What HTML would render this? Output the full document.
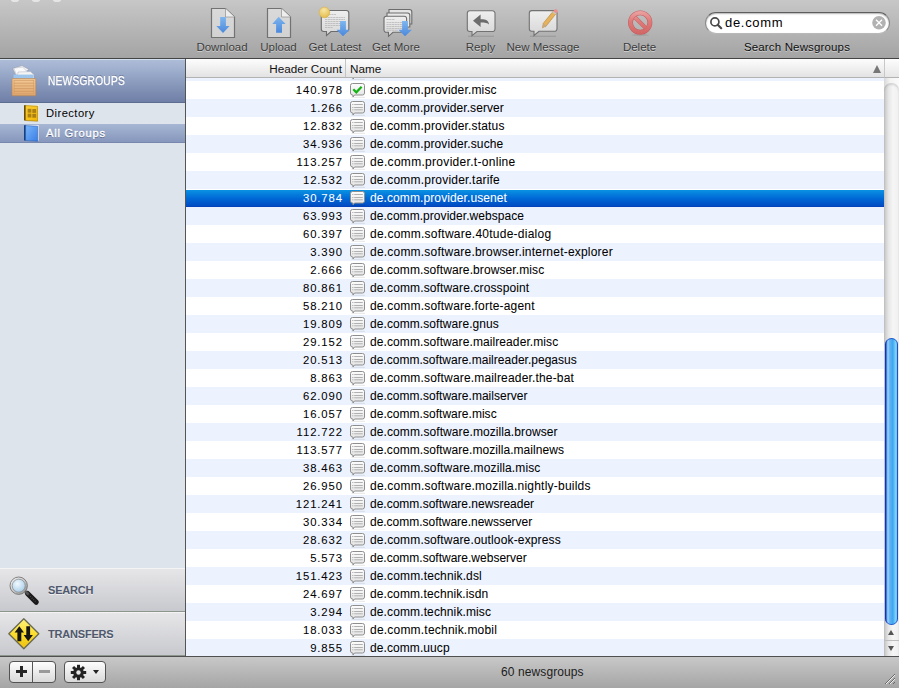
<!DOCTYPE html>
<html><head><meta charset="utf-8">
<style>
*{box-sizing:border-box}
html,body{margin:0;padding:0;width:899px;height:688px;overflow:hidden;font-family:"Liberation Sans",sans-serif;background:#fff}
.abs{position:absolute}
svg.abs{z-index:3}
#toolbar{position:absolute;left:0;top:0;width:899px;height:59px;background:linear-gradient(#c7c7c7,#a4a4a4);border-bottom:1px solid #444}
.tl{position:absolute;top:41px;font-size:11.5px;color:#3c3c3c;text-shadow:0 1px 0 rgba(255,255,255,.45);white-space:nowrap;transform:translateX(-50%)}
.ti{position:absolute}
#sidebar{position:absolute;left:0;top:59px;width:185px;height:597px;background:#dde4ec}
#sbline{position:absolute;left:185px;top:59px;width:1px;height:597px;background:#555}
#ngh{position:absolute;left:0;top:0;width:185px;height:44px;background:linear-gradient(#aebdd8,#a2b2d0 20%,#6e7ea6);border-bottom:1px solid #5d6d92;box-shadow:inset 0 1px 0 #d2ddef}
#ngh .t{position:absolute;left:48px;top:14.5px;font-size:12.4px;font-weight:normal;-webkit-text-stroke:0.35px #fff;color:#fff;letter-spacing:0.3px;text-shadow:0 -1px 0 rgba(40,50,80,.5);transform-origin:0 0;transform:scaleX(0.82)}
.srow{position:absolute;left:0;width:185px;font-size:11.2px;letter-spacing:0.45px}
.sect{position:absolute;left:0;width:185px;background:linear-gradient(#e6e6e8,#c8c9ce);border-top:1px solid #f4f4f5;border-bottom:1px solid #8c968c}
.sect .t{position:absolute;left:48px;font-size:11px;font-weight:bold;color:#4f586c;text-shadow:0 1px 0 rgba(255,255,255,.6);letter-spacing:-0.2px}
#thead{position:absolute;left:186px;top:59px;width:698px;height:19px;background:linear-gradient(#fdfdfd,#e3e3e3);border-bottom:1px solid #b3b3b3}
#thead .h{position:absolute;top:3px;font-size:11.7px;color:#111}
#corner{position:absolute;left:884px;top:59px;width:15px;height:19px;background:linear-gradient(#fdfdfd,#e6e6e6);border-left:1px solid #c8c8c8;border-bottom:1px solid #b3b3b3}
#tbody{position:absolute;left:186px;top:78px;width:698px;height:578px;overflow:hidden;background:#fff}
.row{position:absolute;left:0;width:698px;height:18px;font-size:12px;line-height:18px;color:#000;-webkit-text-stroke:0.05px currentColor}
.row.odd{background:#edf3fe}
.row.sel{background:linear-gradient(#0a92e2,#0068d6 50%,#004cc2 94%,#0a3ab4);color:#fff;border-top:1px solid #fff}
.row.sel .cnt,.row.sel .nm{line-height:16px}
.cnt{position:absolute;right:541.1px;top:0;text-align:right;font-size:11.3px;letter-spacing:0.9px}
.ico{position:absolute;left:164px;top:2px;width:16px;height:16px}
.row.sel .ico{top:1px}
.ico svg{display:block}
.nm{position:absolute;left:184px;top:0;white-space:nowrap;letter-spacing:0.12px}
#scroll{position:absolute;left:884px;top:78px;width:15px;height:578px;background:linear-gradient(90deg,#d8d8d8,#f4f4f4 40%,#fafafa)}
#track{position:absolute;left:0;top:5px;width:15px;height:573px;border-radius:7px 7px 0 0;background:linear-gradient(90deg,#c4c4c4,#e6e6e6 30%,#f6f6f6 60%,#efefef);box-shadow:inset 0 2px 2px rgba(0,0,0,.12)}
#bottom{position:absolute;left:0;top:656px;width:899px;height:32px;background:linear-gradient(#c8c8c8,#a5a5a5);border-top:1px solid #505050}
</style></head><body>

<div id="toolbar">
  <div class="abs" style="left:11px;top:-2px;width:8px;height:4px;border-radius:50%;background:rgba(255,255,255,.55);filter:blur(0.6px)"></div>
  <div class="abs" style="left:32px;top:-2px;width:8px;height:4px;border-radius:50%;background:rgba(255,255,255,.55);filter:blur(0.6px)"></div>
  <div class="abs" style="left:53px;top:-2px;width:8px;height:4px;border-radius:50%;background:rgba(255,255,255,.55);filter:blur(0.6px)"></div>

  <!-- Download -->
  <svg class="ti" style="left:210px;top:7px" width="27" height="32" viewBox="0 0 27 32">
    <defs><linearGradient id="blu" x1="0" y1="0" x2="0" y2="1"><stop offset="0" stop-color="#7fb6ee"/><stop offset="1" stop-color="#4a88dc"/></linearGradient>
    <linearGradient id="docg" x1="0" y1="0" x2="0" y2="1"><stop offset="0" stop-color="#dadada"/><stop offset="1" stop-color="#d2d2d2"/></linearGradient></defs>
    <path d="M1.5 1.5H15.5L24.5 10V30.5H1.5Z" fill="url(#docg)" stroke="#727272" stroke-width="1.2"/>
    <path d="M15.5 1.5V10H24.5" fill="#eeeeee" stroke="#9a9a9a" stroke-width="0.8"/>
    <path d="M10.2 10H15.9V19H19.6L13.05 26.1L6.3 19H10.2Z" fill="url(#blu)"/>
  </svg>
  <!-- Upload -->
  <svg class="ti" style="left:266px;top:7px" width="27" height="32" viewBox="0 0 27 32">
    <path d="M1.5 1.5H15.5L24.5 10V30.5H1.5Z" fill="url(#docg)" stroke="#727272" stroke-width="1.2"/>
    <path d="M15.5 1.5V10H24.5" fill="#eeeeee" stroke="#9a9a9a" stroke-width="0.8"/>
    <path d="M12.65 9.8L19.6 16.9H16V25.8H10.1V16.9H6.3Z" fill="url(#blu)"/>
  </svg>
  <!-- Get Latest -->
  <svg class="ti" style="left:316px;top:5px" width="36" height="34" viewBox="0 0 36 34">
    <defs><linearGradient id="bub" x1="0" y1="0" x2="0" y2="1"><stop offset="0" stop-color="#efefef"/><stop offset="1" stop-color="#d6d6d6"/></linearGradient>
    <radialGradient id="yel" cx="0.45" cy="0.3" r="0.7"><stop offset="0" stop-color="#f8e6a6"/><stop offset="1" stop-color="#e3bd4c"/></radialGradient></defs>
    <path d="M7.8 5.5H30.3A2.5 2.5 0 0 1 32.8 8V24A2.5 2.5 0 0 1 30.3 26.5H15L10.5 30.5V26.5H7.8A2.5 2.5 0 0 1 5.3 24V8A2.5 2.5 0 0 1 7.8 5.5Z" fill="url(#bub)" stroke="#6c6c6c" stroke-width="1.1"/>
    <g stroke="#a8a8a8" stroke-width="0.6" stroke-dasharray="2.2 0.5"><path d="M10 9.5H20"/><path d="M9 12.5H29"/><path d="M9 14.5H29"/><path d="M9 16.5H29"/><path d="M9 18.5H29"/><path d="M9 20.5H29"/><path d="M9 22.5H17"/></g>
    <circle cx="8.4" cy="7.4" r="5.3" fill="url(#yel)" stroke="#d8b65a" stroke-width="0.8"/>
    <path d="M24.1 16H29.9V24.7H33.8L27 31.2L20.5 24.7H24.1Z" fill="url(#blu)"/>
  </svg>
  <!-- Get More -->
  <svg class="ti" style="left:380px;top:5px" width="36" height="34" viewBox="0 0 36 34">
    <path d="M9 4.5H29.5A2.3 2.3 0 0 1 31.8 6.8V19H9Z" fill="#e4e4e4" stroke="#6c6c6c" stroke-width="1.1"/>
    <path d="M7 8H27.5A2.3 2.3 0 0 1 29.8 10.3V22H7Z" fill="#e8e8e8" stroke="#6c6c6c" stroke-width="1.1"/>
    <path d="M6.3 11.3H24.3A2.3 2.3 0 0 1 26.6 13.6V25A2.3 2.3 0 0 1 24.3 27.3H13L8.5 31.3V27.3H6.3A2.3 2.3 0 0 1 4 25V13.6A2.3 2.3 0 0 1 6.3 11.3Z" fill="url(#bub)" stroke="#6c6c6c" stroke-width="1.1"/>
    <g stroke="#a8a8a8" stroke-width="0.6" stroke-dasharray="2.2 0.5"><path d="M6.5 14.5H15"/><path d="M6.5 17.5H24"/><path d="M6.5 19.5H24"/><path d="M6.5 21.5H24"/><path d="M6.5 23.5H24"/><path d="M6.5 25.3H18"/></g>
    <path d="M22.1 16H27.9V24.7H32L25 31.2L18.4 24.7H22.1Z" fill="url(#blu)"/>
  </svg>
  <!-- Reply -->
  <svg class="ti" style="left:464px;top:7px" width="34" height="31" viewBox="0 0 34 31">
    <path d="M5.8 3.8H28.5A2.5 2.5 0 0 1 31 6.3V22A2.5 2.5 0 0 1 28.5 24.5H13L8 28.6V24.5H5.8A2.5 2.5 0 0 1 3.3 22V6.3A2.5 2.5 0 0 1 5.8 3.8Z" fill="url(#bub)" stroke="#727272" stroke-width="1.1"/>
    <path d="M9 13.8L16.6 7.5V12.3C21 12.1 24.7 13.2 25 17.4C23.9 15.9 21 15.7 16.6 15.6V20Z" fill="#6c6c6c"/>
    <path d="M4 29.3H30" stroke="rgba(0,0,0,0.12)" stroke-width="1.2"/>
  </svg>
  <!-- New Message -->
  <svg class="ti" style="left:526px;top:5px" width="34" height="33" viewBox="0 0 34 33">
    <path d="M5.8 5.6H28.5A2.5 2.5 0 0 1 31 8.1V23.8A2.5 2.5 0 0 1 28.5 26.3H13L8 30.5V26.3H5.8A2.5 2.5 0 0 1 3.3 23.8V8.1A2.5 2.5 0 0 1 5.8 5.6Z" fill="url(#bub)" stroke="#727272" stroke-width="1.1"/>
    <path d="M18 21.5L26.5 9.5" stroke="rgba(0,0,0,0.12)" stroke-width="4"/>
    <path d="M4 31.3H30" stroke="rgba(0,0,0,0.12)" stroke-width="1.2"/>
    <path d="M16.5 22.8L17.3 18.3L27.2 6.2L30.2 8.6L20.3 20.7Z" fill="#e6b35c" stroke="#b8883a" stroke-width="0.6"/>
    <path d="M16.5 22.8L17.3 18.3L20.3 20.7Z" fill="#c8a882"/>
    <path d="M27.2 6.2L28.4 4.8A1.5 1.5 0 0 1 30.6 4.6L31.2 5.1A1.5 1.5 0 0 1 31.4 7.2L30.2 8.6Z" fill="#e89090"/>
    <path d="M26.8 6.7L29.8 9.1" stroke="#c8c8c8" stroke-width="1.3"/>
  </svg>
  <!-- Delete -->
  <svg class="ti" style="left:626px;top:9px" width="28" height="28" viewBox="0 0 28 28">
    <defs><linearGradient id="red" gradientUnits="userSpaceOnUse" x1="0" y1="2" x2="0" y2="25"><stop offset="0" stop-color="#eba4a4"/><stop offset="0.45" stop-color="#df7a7a"/><stop offset="1" stop-color="#d26666"/></linearGradient></defs>
    <ellipse cx="14.2" cy="26" rx="9" ry="1.2" fill="rgba(0,0,0,0.08)"/>
    <circle cx="14.2" cy="13.6" r="9.7" fill="none" stroke="#c25c5c" stroke-width="4.9"/>
    <circle cx="14.2" cy="13.6" r="9.7" fill="none" stroke="url(#red)" stroke-width="3.9"/>
    <path d="M8.9 8.3L19.5 18.9" stroke="#c86262" stroke-width="4.1"/>
    <path d="M8.9 8.3L19.5 18.9" stroke="url(#red)" stroke-width="3.3"/>
  </svg>
  <!-- Search field -->
  <div class="abs" style="left:705px;top:12px;width:185px;height:22px;border-radius:11px;background:#fff;border:1px solid;border-color:#5e5e5e #8a8a8a #b8b8b8 #8a8a8a;box-shadow:inset 0 1px 1.5px rgba(0,0,0,.3)"></div>
  <svg class="ti" style="left:709px;top:16px" width="15" height="15" viewBox="0 0 15 15">
    <circle cx="5.9" cy="5.9" r="4" fill="none" stroke="#4a4a4a" stroke-width="1.7"/>
    <path d="M8.7 8.7L12.2 12.2" stroke="#4a4a4a" stroke-width="2.2" stroke-linecap="round"/>
  </svg>
  <div class="abs" style="left:725px;top:15px;font-size:13px;color:#000;letter-spacing:0.7px">de.comm</div>
  <svg class="ti" style="left:871px;top:16px" width="15" height="15" viewBox="0 0 15 15">
    <circle cx="8" cy="6.8" r="6.8" fill="#b2b2b2"/>
    <path d="M5 3.8L11 9.8M11 3.8L5 9.8" stroke="#fff" stroke-width="1.3"/>
  </svg>
  <div class="tl" style="left:222px">Download</div>
  <div class="tl" style="left:278.5px">Upload</div>
  <div class="tl" style="left:335px">Get Latest</div>
  <div class="tl" style="left:396px">Get More</div>
  <div class="tl" style="left:480.5px">Reply</div>
  <div class="tl" style="left:543px">New Message</div>
  <div class="tl" style="left:639.5px">Delete</div>
  <div class="tl" style="left:797px;color:#0e0e0e;letter-spacing:0.15px">Search Newsgroups</div>
</div>

<div id="sidebar">
  <div id="ngh"><div class="t">NEWSGROUPS</div></div>
  <!-- crate icon -->
  <svg class="abs" style="left:9px;top:4px" width="30" height="36" viewBox="0 0 30 36">
    <defs><linearGradient id="wood" x1="0" y1="0" x2="0" y2="1"><stop offset="0" stop-color="#f3c995"/><stop offset="1" stop-color="#e0a66e"/></linearGradient></defs>
    <path d="M3.6 5.5L13 2.6L20 6.5L8 14Z" fill="#f2f2f2" stroke="#8e95a8" stroke-width="0.5"/>
    <path d="M4.8 5.2L13.5 4L18.5 9L9 15.5Z" fill="#fafafa" stroke="#a0a6b6" stroke-width="0.4"/>
    <path d="M9 9L21.5 8.6L24.8 11.5L25 15.6H8Z" fill="#f4f4f4" stroke="#9aa0b0" stroke-width="0.4"/>
    <rect x="4.5" y="11.6" width="20" height="4.2" fill="#9ec6ec"/>
    <rect x="3" y="15.6" width="23.8" height="17.2" rx="0.8" fill="url(#wood)" stroke="#b98656" stroke-width="0.7"/>
    <rect x="5" y="17.5" width="19.8" height="13.4" fill="none" stroke="#cf9a64" stroke-width="0.6"/>
    <g stroke="#c99058" stroke-width="0.7" opacity="0.85"><path d="M5 20.2H24.8"/><path d="M5 22.9H24.8"/><path d="M5 25.6H24.8"/><path d="M5 28.3H24.8"/></g>
  </svg>
  <!-- directory book -->
  <svg class="abs" style="left:23px;top:45px" width="17" height="18" viewBox="0 0 17 18">
    <defs><linearGradient id="yb" x1="0" y1="0" x2="1" y2="1"><stop offset="0" stop-color="#ffd23a"/><stop offset="1" stop-color="#f0b400"/></linearGradient></defs>
    <path d="M1 1.2H14V16.5H1Z" fill="#6a4e06"/>
    <path d="M3 1H15.6V16.8L14.2 16.4H3Z" fill="#fff6d0"/>
    <path d="M2.6 1.6L14.6 2.2V17.2L2.6 16.5Z" fill="url(#yb)" stroke="#9a7406" stroke-width="0.6"/>
    <g fill="#a27a12" opacity="0.9"><rect x="4.6" y="4.8" width="3.8" height="3.9"/><rect x="9.3" y="5" width="3.8" height="3.9"/><rect x="4.6" y="9.6" width="3.8" height="3.9"/><rect x="9.3" y="9.8" width="3.8" height="3.9"/></g>
  </svg>
  <!-- all groups book -->
  <svg class="abs" style="left:23px;top:65px" width="17" height="18" viewBox="0 0 17 18">
    <defs><linearGradient id="bb" x1="0" y1="0" x2="1" y2="1"><stop offset="0" stop-color="#7ab6fa"/><stop offset="1" stop-color="#3a7ee6"/></linearGradient></defs>
    <path d="M1 1.2H14V16.5H1Z" fill="#163e80"/>
    <path d="M3 1H15.6V16.8L14.2 16.4H3Z" fill="#f4f8ff"/>
    <path d="M2.6 1.6L14.6 2.2V17.2L2.6 16.5Z" fill="url(#bb)" stroke="#2a5fb0" stroke-width="0.6"/>
  </svg>
  <div class="srow" style="top:44px;height:21px;background:#dee4ec"><span class="abs" style="left:46px;top:4px;color:#000">Directory</span></div>
  <div class="srow" style="top:65px;height:19px;background:linear-gradient(#a6b6d3,#8797bd);border-bottom:1px solid #7787ad"><span class="abs" style="left:46px;top:3px;color:#fff;letter-spacing:0.75px;-webkit-text-stroke:0.3px #fff;text-shadow:0 1px 0 rgba(20,30,60,.5)">All Groups</span></div>
  <div class="sect" style="top:509px;height:44px"><div class="t" style="top:15px">SEARCH</div></div>
  <div class="sect" style="top:553px;height:44px"><div class="t" style="top:15px">TRANSFERS</div></div>
</div>
<div id="sbline"></div>
  <!-- magnifier -->
  <svg class="abs" style="left:6px;top:573px" width="34" height="34" viewBox="0 0 34 34">
    <defs><radialGradient id="glass" cx="0.4" cy="0.35" r="0.7"><stop offset="0" stop-color="#f2faff"/><stop offset="1" stop-color="#a6cce8"/></radialGradient>
    <linearGradient id="rim" x1="0" y1="0" x2="1" y2="1"><stop offset="0" stop-color="#fafafa"/><stop offset="0.6" stop-color="#bdbdbd"/><stop offset="1" stop-color="#8a8a8a"/></linearGradient></defs>
    <path d="M21.5 20.5L30.2 29.2" stroke="#1a1a1a" stroke-width="5.2" stroke-linecap="round"/>
    <path d="M22.5 21.5L29.5 28.5" stroke="#4a4a4a" stroke-width="1.4" stroke-dasharray="1 1.3"/>
    <path d="M18.5 17.5L22.5 21.5" stroke="#555" stroke-width="2.6"/>
    <circle cx="12.7" cy="12.7" r="8.7" fill="url(#rim)" stroke="#6a6a6a" stroke-width="0.8"/>
    <circle cx="12.7" cy="12.7" r="6.5" fill="url(#glass)" stroke="#7c7c7c" stroke-width="0.6"/>
  </svg>
  <!-- transfers diamond -->
  <svg class="abs" style="left:7px;top:617px" width="34" height="34" viewBox="0 0 34 34">
    <defs><linearGradient id="ylw" x1="0" y1="0" x2="0" y2="1"><stop offset="0" stop-color="#fff27e"/><stop offset="0.5" stop-color="#fbde2e"/><stop offset="1" stop-color="#eec00c"/></linearGradient></defs>
    <path d="M16.8 1.8L31.8 16.8L16.8 31.8L1.8 16.8Z" fill="url(#ylw)" stroke="#6a6a52" stroke-width="1.3" stroke-linejoin="round"/>
    <path d="M12.3 9.3L17 15.5H14.3V24.3H10.4V15.5H7.6Z" fill="#161616"/>
    <path d="M21.2 24.3L16.6 18.1H19.3V9.3H23.1V18.1H25.9Z" fill="#161616"/>
  </svg>
<div id="thead">
  <div class="h" style="right:542px">Header Count</div>
  <div class="abs" style="left:159px;top:0;width:1px;height:18px;background:#c4c4c4"></div>
  <div class="h" style="left:164px">Name</div>
</div>
<div id="corner"></div>
<div class="abs" style="left:873px;top:65px;width:0;height:0;border-left:4px solid transparent;border-right:4px solid transparent;border-bottom:8px solid #777"></div>

<div id="tbody">
<div class="row odd" style="top:-15px"><span class="ico"><svg width="16" height="16" viewBox="0 0 16 16"><defs><linearGradient id="bgp" x1="0" y1="0" x2="0" y2="1"><stop offset="0" stop-color="#fdfdfd"/><stop offset="1" stop-color="#e2e2e2"/></linearGradient></defs><path d="M2.5 0.5h10a2 2 0 0 1 2 2v7.5a2 2 0 0 1-2 2h-8l-1.5 2v-2h-0.5a2 2 0 0 1-2-2v-7.5a2 2 0 0 1 2-2z" fill="url(#bgp)" stroke="#8e8e8e" stroke-width="1"/><path d="M1.5 14.3H15" stroke="rgba(0,0,0,0.13)" stroke-width="0.8"/><g fill="#b0b0b0"><rect x="2.2" y="3" width="1.2" height="1"/><rect x="4.2" y="3" width="8.6" height="1"/><rect x="2.2" y="6" width="1.2" height="1"/><rect x="4.2" y="6" width="8.6" height="1"/><rect x="2.2" y="8.3" width="1.2" height="1"/><rect x="4.2" y="8.3" width="8.6" height="1"/></g></svg></span></div>
<div class="row" style="top:3px"><span class="cnt">140.978</span><span class="ico"><svg width="16" height="16" viewBox="0 0 16 16"><defs><linearGradient id="bgc" x1="0" y1="0" x2="0" y2="1"><stop offset="0" stop-color="#fdfdfd"/><stop offset="1" stop-color="#e2e2e2"/></linearGradient></defs><path d="M2.5 0.5h10a2 2 0 0 1 2 2v7.5a2 2 0 0 1-2 2h-8l-1.5 2v-2h-0.5a2 2 0 0 1-2-2v-7.5a2 2 0 0 1 2-2z" fill="url(#bgc)" stroke="#8e8e8e" stroke-width="1"/><path d="M1.5 14.3H15" stroke="rgba(0,0,0,0.13)" stroke-width="0.8"/><path d="M3.3 6.3l3 3 5.3-5.6" fill="none" stroke="#12b312" stroke-width="2.2"/></svg></span><span class="nm" style="letter-spacing:0.16px">de.comm.provider.misc</span></div>
<div class="row odd" style="top:21px"><span class="cnt">1.266</span><span class="ico"><svg width="16" height="16" viewBox="0 0 16 16"><defs><linearGradient id="bg1" x1="0" y1="0" x2="0" y2="1"><stop offset="0" stop-color="#fdfdfd"/><stop offset="1" stop-color="#e2e2e2"/></linearGradient></defs><path d="M2.5 0.5h10a2 2 0 0 1 2 2v7.5a2 2 0 0 1-2 2h-8l-1.5 2v-2h-0.5a2 2 0 0 1-2-2v-7.5a2 2 0 0 1 2-2z" fill="url(#bg1)" stroke="#8e8e8e" stroke-width="1"/><path d="M1.5 14.3H15" stroke="rgba(0,0,0,0.13)" stroke-width="0.8"/><g fill="#b0b0b0"><rect x="2.2" y="3" width="1.2" height="1"/><rect x="4.2" y="3" width="8.6" height="1"/><rect x="2.2" y="6" width="1.2" height="1"/><rect x="4.2" y="6" width="8.6" height="1"/><rect x="2.2" y="8.3" width="1.2" height="1"/><rect x="4.2" y="8.3" width="8.6" height="1"/></g></svg></span><span class="nm" style="letter-spacing:0.08px">de.comm.provider.server</span></div>
<div class="row" style="top:39px"><span class="cnt">12.832</span><span class="ico"><svg width="16" height="16" viewBox="0 0 16 16"><defs><linearGradient id="bg2" x1="0" y1="0" x2="0" y2="1"><stop offset="0" stop-color="#fdfdfd"/><stop offset="1" stop-color="#e2e2e2"/></linearGradient></defs><path d="M2.5 0.5h10a2 2 0 0 1 2 2v7.5a2 2 0 0 1-2 2h-8l-1.5 2v-2h-0.5a2 2 0 0 1-2-2v-7.5a2 2 0 0 1 2-2z" fill="url(#bg2)" stroke="#8e8e8e" stroke-width="1"/><path d="M1.5 14.3H15" stroke="rgba(0,0,0,0.13)" stroke-width="0.8"/><g fill="#b0b0b0"><rect x="2.2" y="3" width="1.2" height="1"/><rect x="4.2" y="3" width="8.6" height="1"/><rect x="2.2" y="6" width="1.2" height="1"/><rect x="4.2" y="6" width="8.6" height="1"/><rect x="2.2" y="8.3" width="1.2" height="1"/><rect x="4.2" y="8.3" width="8.6" height="1"/></g></svg></span><span class="nm" style="letter-spacing:0.17px">de.comm.provider.status</span></div>
<div class="row odd" style="top:57px"><span class="cnt">34.936</span><span class="ico"><svg width="16" height="16" viewBox="0 0 16 16"><defs><linearGradient id="bg3" x1="0" y1="0" x2="0" y2="1"><stop offset="0" stop-color="#fdfdfd"/><stop offset="1" stop-color="#e2e2e2"/></linearGradient></defs><path d="M2.5 0.5h10a2 2 0 0 1 2 2v7.5a2 2 0 0 1-2 2h-8l-1.5 2v-2h-0.5a2 2 0 0 1-2-2v-7.5a2 2 0 0 1 2-2z" fill="url(#bg3)" stroke="#8e8e8e" stroke-width="1"/><path d="M1.5 14.3H15" stroke="rgba(0,0,0,0.13)" stroke-width="0.8"/><g fill="#b0b0b0"><rect x="2.2" y="3" width="1.2" height="1"/><rect x="4.2" y="3" width="8.6" height="1"/><rect x="2.2" y="6" width="1.2" height="1"/><rect x="4.2" y="6" width="8.6" height="1"/><rect x="2.2" y="8.3" width="1.2" height="1"/><rect x="4.2" y="8.3" width="8.6" height="1"/></g></svg></span><span class="nm" style="letter-spacing:0.12px">de.comm.provider.suche</span></div>
<div class="row" style="top:75px"><span class="cnt">113.257</span><span class="ico"><svg width="16" height="16" viewBox="0 0 16 16"><defs><linearGradient id="bg4" x1="0" y1="0" x2="0" y2="1"><stop offset="0" stop-color="#fdfdfd"/><stop offset="1" stop-color="#e2e2e2"/></linearGradient></defs><path d="M2.5 0.5h10a2 2 0 0 1 2 2v7.5a2 2 0 0 1-2 2h-8l-1.5 2v-2h-0.5a2 2 0 0 1-2-2v-7.5a2 2 0 0 1 2-2z" fill="url(#bg4)" stroke="#8e8e8e" stroke-width="1"/><path d="M1.5 14.3H15" stroke="rgba(0,0,0,0.13)" stroke-width="0.8"/><g fill="#b0b0b0"><rect x="2.2" y="3" width="1.2" height="1"/><rect x="4.2" y="3" width="8.6" height="1"/><rect x="2.2" y="6" width="1.2" height="1"/><rect x="4.2" y="6" width="8.6" height="1"/><rect x="2.2" y="8.3" width="1.2" height="1"/><rect x="4.2" y="8.3" width="8.6" height="1"/></g></svg></span><span class="nm" style="letter-spacing:0.3px">de.comm.provider.t-online</span></div>
<div class="row odd" style="top:93px"><span class="cnt">12.532</span><span class="ico"><svg width="16" height="16" viewBox="0 0 16 16"><defs><linearGradient id="bg5" x1="0" y1="0" x2="0" y2="1"><stop offset="0" stop-color="#fdfdfd"/><stop offset="1" stop-color="#e2e2e2"/></linearGradient></defs><path d="M2.5 0.5h10a2 2 0 0 1 2 2v7.5a2 2 0 0 1-2 2h-8l-1.5 2v-2h-0.5a2 2 0 0 1-2-2v-7.5a2 2 0 0 1 2-2z" fill="url(#bg5)" stroke="#8e8e8e" stroke-width="1"/><path d="M1.5 14.3H15" stroke="rgba(0,0,0,0.13)" stroke-width="0.8"/><g fill="#b0b0b0"><rect x="2.2" y="3" width="1.2" height="1"/><rect x="4.2" y="3" width="8.6" height="1"/><rect x="2.2" y="6" width="1.2" height="1"/><rect x="4.2" y="6" width="8.6" height="1"/><rect x="2.2" y="8.3" width="1.2" height="1"/><rect x="4.2" y="8.3" width="8.6" height="1"/></g></svg></span><span class="nm" style="letter-spacing:0.2px">de.comm.provider.tarife</span></div>
<div class="row sel" style="top:111px"><span class="cnt">30.784</span><span class="ico"><svg width="16" height="16" viewBox="0 0 16 16"><defs><linearGradient id="bg6" x1="0" y1="0" x2="0" y2="1"><stop offset="0" stop-color="#fdfdfd"/><stop offset="1" stop-color="#e2e2e2"/></linearGradient></defs><path d="M2.5 0.5h10a2 2 0 0 1 2 2v7.5a2 2 0 0 1-2 2h-8l-1.5 2v-2h-0.5a2 2 0 0 1-2-2v-7.5a2 2 0 0 1 2-2z" fill="url(#bg6)" stroke="#8e8e8e" stroke-width="1"/><path d="M1.5 14.3H15" stroke="rgba(0,0,0,0.13)" stroke-width="0.8"/><g fill="#b0b0b0"><rect x="2.2" y="3" width="1.2" height="1"/><rect x="4.2" y="3" width="8.6" height="1"/><rect x="2.2" y="6" width="1.2" height="1"/><rect x="4.2" y="6" width="8.6" height="1"/><rect x="2.2" y="8.3" width="1.2" height="1"/><rect x="4.2" y="8.3" width="8.6" height="1"/></g></svg></span><span class="nm" style="letter-spacing:0.1px">de.comm.provider.usenet</span></div>
<div class="row odd" style="top:129px"><span class="cnt">63.993</span><span class="ico"><svg width="16" height="16" viewBox="0 0 16 16"><defs><linearGradient id="bg7" x1="0" y1="0" x2="0" y2="1"><stop offset="0" stop-color="#fdfdfd"/><stop offset="1" stop-color="#e2e2e2"/></linearGradient></defs><path d="M2.5 0.5h10a2 2 0 0 1 2 2v7.5a2 2 0 0 1-2 2h-8l-1.5 2v-2h-0.5a2 2 0 0 1-2-2v-7.5a2 2 0 0 1 2-2z" fill="url(#bg7)" stroke="#8e8e8e" stroke-width="1"/><path d="M1.5 14.3H15" stroke="rgba(0,0,0,0.13)" stroke-width="0.8"/><g fill="#b0b0b0"><rect x="2.2" y="3" width="1.2" height="1"/><rect x="4.2" y="3" width="8.6" height="1"/><rect x="2.2" y="6" width="1.2" height="1"/><rect x="4.2" y="6" width="8.6" height="1"/><rect x="2.2" y="8.3" width="1.2" height="1"/><rect x="4.2" y="8.3" width="8.6" height="1"/></g></svg></span><span class="nm" style="letter-spacing:0.05px">de.comm.provider.webspace</span></div>
<div class="row" style="top:147px"><span class="cnt">60.397</span><span class="ico"><svg width="16" height="16" viewBox="0 0 16 16"><defs><linearGradient id="bg8" x1="0" y1="0" x2="0" y2="1"><stop offset="0" stop-color="#fdfdfd"/><stop offset="1" stop-color="#e2e2e2"/></linearGradient></defs><path d="M2.5 0.5h10a2 2 0 0 1 2 2v7.5a2 2 0 0 1-2 2h-8l-1.5 2v-2h-0.5a2 2 0 0 1-2-2v-7.5a2 2 0 0 1 2-2z" fill="url(#bg8)" stroke="#8e8e8e" stroke-width="1"/><path d="M1.5 14.3H15" stroke="rgba(0,0,0,0.13)" stroke-width="0.8"/><g fill="#b0b0b0"><rect x="2.2" y="3" width="1.2" height="1"/><rect x="4.2" y="3" width="8.6" height="1"/><rect x="2.2" y="6" width="1.2" height="1"/><rect x="4.2" y="6" width="8.6" height="1"/><rect x="2.2" y="8.3" width="1.2" height="1"/><rect x="4.2" y="8.3" width="8.6" height="1"/></g></svg></span><span class="nm" style="letter-spacing:0.24px">de.comm.software.40tude-dialog</span></div>
<div class="row odd" style="top:165px"><span class="cnt">3.390</span><span class="ico"><svg width="16" height="16" viewBox="0 0 16 16"><defs><linearGradient id="bg9" x1="0" y1="0" x2="0" y2="1"><stop offset="0" stop-color="#fdfdfd"/><stop offset="1" stop-color="#e2e2e2"/></linearGradient></defs><path d="M2.5 0.5h10a2 2 0 0 1 2 2v7.5a2 2 0 0 1-2 2h-8l-1.5 2v-2h-0.5a2 2 0 0 1-2-2v-7.5a2 2 0 0 1 2-2z" fill="url(#bg9)" stroke="#8e8e8e" stroke-width="1"/><path d="M1.5 14.3H15" stroke="rgba(0,0,0,0.13)" stroke-width="0.8"/><g fill="#b0b0b0"><rect x="2.2" y="3" width="1.2" height="1"/><rect x="4.2" y="3" width="8.6" height="1"/><rect x="2.2" y="6" width="1.2" height="1"/><rect x="4.2" y="6" width="8.6" height="1"/><rect x="2.2" y="8.3" width="1.2" height="1"/><rect x="4.2" y="8.3" width="8.6" height="1"/></g></svg></span><span class="nm" style="letter-spacing:0.21px">de.comm.software.browser.internet-explorer</span></div>
<div class="row" style="top:183px"><span class="cnt">2.666</span><span class="ico"><svg width="16" height="16" viewBox="0 0 16 16"><defs><linearGradient id="bg10" x1="0" y1="0" x2="0" y2="1"><stop offset="0" stop-color="#fdfdfd"/><stop offset="1" stop-color="#e2e2e2"/></linearGradient></defs><path d="M2.5 0.5h10a2 2 0 0 1 2 2v7.5a2 2 0 0 1-2 2h-8l-1.5 2v-2h-0.5a2 2 0 0 1-2-2v-7.5a2 2 0 0 1 2-2z" fill="url(#bg10)" stroke="#8e8e8e" stroke-width="1"/><path d="M1.5 14.3H15" stroke="rgba(0,0,0,0.13)" stroke-width="0.8"/><g fill="#b0b0b0"><rect x="2.2" y="3" width="1.2" height="1"/><rect x="4.2" y="3" width="8.6" height="1"/><rect x="2.2" y="6" width="1.2" height="1"/><rect x="4.2" y="6" width="8.6" height="1"/><rect x="2.2" y="8.3" width="1.2" height="1"/><rect x="4.2" y="8.3" width="8.6" height="1"/></g></svg></span><span class="nm" style="letter-spacing:0.1px">de.comm.software.browser.misc</span></div>
<div class="row odd" style="top:201px"><span class="cnt">80.861</span><span class="ico"><svg width="16" height="16" viewBox="0 0 16 16"><defs><linearGradient id="bg11" x1="0" y1="0" x2="0" y2="1"><stop offset="0" stop-color="#fdfdfd"/><stop offset="1" stop-color="#e2e2e2"/></linearGradient></defs><path d="M2.5 0.5h10a2 2 0 0 1 2 2v7.5a2 2 0 0 1-2 2h-8l-1.5 2v-2h-0.5a2 2 0 0 1-2-2v-7.5a2 2 0 0 1 2-2z" fill="url(#bg11)" stroke="#8e8e8e" stroke-width="1"/><path d="M1.5 14.3H15" stroke="rgba(0,0,0,0.13)" stroke-width="0.8"/><g fill="#b0b0b0"><rect x="2.2" y="3" width="1.2" height="1"/><rect x="4.2" y="3" width="8.6" height="1"/><rect x="2.2" y="6" width="1.2" height="1"/><rect x="4.2" y="6" width="8.6" height="1"/><rect x="2.2" y="8.3" width="1.2" height="1"/><rect x="4.2" y="8.3" width="8.6" height="1"/></g></svg></span><span class="nm" style="letter-spacing:0.12px">de.comm.software.crosspoint</span></div>
<div class="row" style="top:219px"><span class="cnt">58.210</span><span class="ico"><svg width="16" height="16" viewBox="0 0 16 16"><defs><linearGradient id="bg12" x1="0" y1="0" x2="0" y2="1"><stop offset="0" stop-color="#fdfdfd"/><stop offset="1" stop-color="#e2e2e2"/></linearGradient></defs><path d="M2.5 0.5h10a2 2 0 0 1 2 2v7.5a2 2 0 0 1-2 2h-8l-1.5 2v-2h-0.5a2 2 0 0 1-2-2v-7.5a2 2 0 0 1 2-2z" fill="url(#bg12)" stroke="#8e8e8e" stroke-width="1"/><path d="M1.5 14.3H15" stroke="rgba(0,0,0,0.13)" stroke-width="0.8"/><g fill="#b0b0b0"><rect x="2.2" y="3" width="1.2" height="1"/><rect x="4.2" y="3" width="8.6" height="1"/><rect x="2.2" y="6" width="1.2" height="1"/><rect x="4.2" y="6" width="8.6" height="1"/><rect x="2.2" y="8.3" width="1.2" height="1"/><rect x="4.2" y="8.3" width="8.6" height="1"/></g></svg></span><span class="nm" style="letter-spacing:0.19px">de.comm.software.forte-agent</span></div>
<div class="row odd" style="top:237px"><span class="cnt">19.809</span><span class="ico"><svg width="16" height="16" viewBox="0 0 16 16"><defs><linearGradient id="bg13" x1="0" y1="0" x2="0" y2="1"><stop offset="0" stop-color="#fdfdfd"/><stop offset="1" stop-color="#e2e2e2"/></linearGradient></defs><path d="M2.5 0.5h10a2 2 0 0 1 2 2v7.5a2 2 0 0 1-2 2h-8l-1.5 2v-2h-0.5a2 2 0 0 1-2-2v-7.5a2 2 0 0 1 2-2z" fill="url(#bg13)" stroke="#8e8e8e" stroke-width="1"/><path d="M1.5 14.3H15" stroke="rgba(0,0,0,0.13)" stroke-width="0.8"/><g fill="#b0b0b0"><rect x="2.2" y="3" width="1.2" height="1"/><rect x="4.2" y="3" width="8.6" height="1"/><rect x="2.2" y="6" width="1.2" height="1"/><rect x="4.2" y="6" width="8.6" height="1"/><rect x="2.2" y="8.3" width="1.2" height="1"/><rect x="4.2" y="8.3" width="8.6" height="1"/></g></svg></span><span class="nm" style="letter-spacing:0.07px">de.comm.software.gnus</span></div>
<div class="row" style="top:255px"><span class="cnt">29.152</span><span class="ico"><svg width="16" height="16" viewBox="0 0 16 16"><defs><linearGradient id="bg14" x1="0" y1="0" x2="0" y2="1"><stop offset="0" stop-color="#fdfdfd"/><stop offset="1" stop-color="#e2e2e2"/></linearGradient></defs><path d="M2.5 0.5h10a2 2 0 0 1 2 2v7.5a2 2 0 0 1-2 2h-8l-1.5 2v-2h-0.5a2 2 0 0 1-2-2v-7.5a2 2 0 0 1 2-2z" fill="url(#bg14)" stroke="#8e8e8e" stroke-width="1"/><path d="M1.5 14.3H15" stroke="rgba(0,0,0,0.13)" stroke-width="0.8"/><g fill="#b0b0b0"><rect x="2.2" y="3" width="1.2" height="1"/><rect x="4.2" y="3" width="8.6" height="1"/><rect x="2.2" y="6" width="1.2" height="1"/><rect x="4.2" y="6" width="8.6" height="1"/><rect x="2.2" y="8.3" width="1.2" height="1"/><rect x="4.2" y="8.3" width="8.6" height="1"/></g></svg></span><span class="nm" style="letter-spacing:0.09px">de.comm.software.mailreader.misc</span></div>
<div class="row odd" style="top:273px"><span class="cnt">20.513</span><span class="ico"><svg width="16" height="16" viewBox="0 0 16 16"><defs><linearGradient id="bg15" x1="0" y1="0" x2="0" y2="1"><stop offset="0" stop-color="#fdfdfd"/><stop offset="1" stop-color="#e2e2e2"/></linearGradient></defs><path d="M2.5 0.5h10a2 2 0 0 1 2 2v7.5a2 2 0 0 1-2 2h-8l-1.5 2v-2h-0.5a2 2 0 0 1-2-2v-7.5a2 2 0 0 1 2-2z" fill="url(#bg15)" stroke="#8e8e8e" stroke-width="1"/><path d="M1.5 14.3H15" stroke="rgba(0,0,0,0.13)" stroke-width="0.8"/><g fill="#b0b0b0"><rect x="2.2" y="3" width="1.2" height="1"/><rect x="4.2" y="3" width="8.6" height="1"/><rect x="2.2" y="6" width="1.2" height="1"/><rect x="4.2" y="6" width="8.6" height="1"/><rect x="2.2" y="8.3" width="1.2" height="1"/><rect x="4.2" y="8.3" width="8.6" height="1"/></g></svg></span><span class="nm" style="letter-spacing:0.02px">de.comm.software.mailreader.pegasus</span></div>
<div class="row" style="top:291px"><span class="cnt">8.863</span><span class="ico"><svg width="16" height="16" viewBox="0 0 16 16"><defs><linearGradient id="bg16" x1="0" y1="0" x2="0" y2="1"><stop offset="0" stop-color="#fdfdfd"/><stop offset="1" stop-color="#e2e2e2"/></linearGradient></defs><path d="M2.5 0.5h10a2 2 0 0 1 2 2v7.5a2 2 0 0 1-2 2h-8l-1.5 2v-2h-0.5a2 2 0 0 1-2-2v-7.5a2 2 0 0 1 2-2z" fill="url(#bg16)" stroke="#8e8e8e" stroke-width="1"/><path d="M1.5 14.3H15" stroke="rgba(0,0,0,0.13)" stroke-width="0.8"/><g fill="#b0b0b0"><rect x="2.2" y="3" width="1.2" height="1"/><rect x="4.2" y="3" width="8.6" height="1"/><rect x="2.2" y="6" width="1.2" height="1"/><rect x="4.2" y="6" width="8.6" height="1"/><rect x="2.2" y="8.3" width="1.2" height="1"/><rect x="4.2" y="8.3" width="8.6" height="1"/></g></svg></span><span class="nm" style="letter-spacing:0.17px">de.comm.software.mailreader.the-bat</span></div>
<div class="row odd" style="top:309px"><span class="cnt">62.090</span><span class="ico"><svg width="16" height="16" viewBox="0 0 16 16"><defs><linearGradient id="bg17" x1="0" y1="0" x2="0" y2="1"><stop offset="0" stop-color="#fdfdfd"/><stop offset="1" stop-color="#e2e2e2"/></linearGradient></defs><path d="M2.5 0.5h10a2 2 0 0 1 2 2v7.5a2 2 0 0 1-2 2h-8l-1.5 2v-2h-0.5a2 2 0 0 1-2-2v-7.5a2 2 0 0 1 2-2z" fill="url(#bg17)" stroke="#8e8e8e" stroke-width="1"/><path d="M1.5 14.3H15" stroke="rgba(0,0,0,0.13)" stroke-width="0.8"/><g fill="#b0b0b0"><rect x="2.2" y="3" width="1.2" height="1"/><rect x="4.2" y="3" width="8.6" height="1"/><rect x="2.2" y="6" width="1.2" height="1"/><rect x="4.2" y="6" width="8.6" height="1"/><rect x="2.2" y="8.3" width="1.2" height="1"/><rect x="4.2" y="8.3" width="8.6" height="1"/></g></svg></span><span class="nm" style="letter-spacing:0.03px">de.comm.software.mailserver</span></div>
<div class="row" style="top:327px"><span class="cnt">16.057</span><span class="ico"><svg width="16" height="16" viewBox="0 0 16 16"><defs><linearGradient id="bg18" x1="0" y1="0" x2="0" y2="1"><stop offset="0" stop-color="#fdfdfd"/><stop offset="1" stop-color="#e2e2e2"/></linearGradient></defs><path d="M2.5 0.5h10a2 2 0 0 1 2 2v7.5a2 2 0 0 1-2 2h-8l-1.5 2v-2h-0.5a2 2 0 0 1-2-2v-7.5a2 2 0 0 1 2-2z" fill="url(#bg18)" stroke="#8e8e8e" stroke-width="1"/><path d="M1.5 14.3H15" stroke="rgba(0,0,0,0.13)" stroke-width="0.8"/><g fill="#b0b0b0"><rect x="2.2" y="3" width="1.2" height="1"/><rect x="4.2" y="3" width="8.6" height="1"/><rect x="2.2" y="6" width="1.2" height="1"/><rect x="4.2" y="6" width="8.6" height="1"/><rect x="2.2" y="8.3" width="1.2" height="1"/><rect x="4.2" y="8.3" width="8.6" height="1"/></g></svg></span><span class="nm" style="letter-spacing:0.03px">de.comm.software.misc</span></div>
<div class="row odd" style="top:345px"><span class="cnt">112.722</span><span class="ico"><svg width="16" height="16" viewBox="0 0 16 16"><defs><linearGradient id="bg19" x1="0" y1="0" x2="0" y2="1"><stop offset="0" stop-color="#fdfdfd"/><stop offset="1" stop-color="#e2e2e2"/></linearGradient></defs><path d="M2.5 0.5h10a2 2 0 0 1 2 2v7.5a2 2 0 0 1-2 2h-8l-1.5 2v-2h-0.5a2 2 0 0 1-2-2v-7.5a2 2 0 0 1 2-2z" fill="url(#bg19)" stroke="#8e8e8e" stroke-width="1"/><path d="M1.5 14.3H15" stroke="rgba(0,0,0,0.13)" stroke-width="0.8"/><g fill="#b0b0b0"><rect x="2.2" y="3" width="1.2" height="1"/><rect x="4.2" y="3" width="8.6" height="1"/><rect x="2.2" y="6" width="1.2" height="1"/><rect x="4.2" y="6" width="8.6" height="1"/><rect x="2.2" y="8.3" width="1.2" height="1"/><rect x="4.2" y="8.3" width="8.6" height="1"/></g></svg></span><span class="nm" style="letter-spacing:0.09px">de.comm.software.mozilla.browser</span></div>
<div class="row" style="top:363px"><span class="cnt">113.577</span><span class="ico"><svg width="16" height="16" viewBox="0 0 16 16"><defs><linearGradient id="bg20" x1="0" y1="0" x2="0" y2="1"><stop offset="0" stop-color="#fdfdfd"/><stop offset="1" stop-color="#e2e2e2"/></linearGradient></defs><path d="M2.5 0.5h10a2 2 0 0 1 2 2v7.5a2 2 0 0 1-2 2h-8l-1.5 2v-2h-0.5a2 2 0 0 1-2-2v-7.5a2 2 0 0 1 2-2z" fill="url(#bg20)" stroke="#8e8e8e" stroke-width="1"/><path d="M1.5 14.3H15" stroke="rgba(0,0,0,0.13)" stroke-width="0.8"/><g fill="#b0b0b0"><rect x="2.2" y="3" width="1.2" height="1"/><rect x="4.2" y="3" width="8.6" height="1"/><rect x="2.2" y="6" width="1.2" height="1"/><rect x="4.2" y="6" width="8.6" height="1"/><rect x="2.2" y="8.3" width="1.2" height="1"/><rect x="4.2" y="8.3" width="8.6" height="1"/></g></svg></span><span class="nm" style="letter-spacing:0.06px">de.comm.software.mozilla.mailnews</span></div>
<div class="row odd" style="top:381px"><span class="cnt">38.463</span><span class="ico"><svg width="16" height="16" viewBox="0 0 16 16"><defs><linearGradient id="bg21" x1="0" y1="0" x2="0" y2="1"><stop offset="0" stop-color="#fdfdfd"/><stop offset="1" stop-color="#e2e2e2"/></linearGradient></defs><path d="M2.5 0.5h10a2 2 0 0 1 2 2v7.5a2 2 0 0 1-2 2h-8l-1.5 2v-2h-0.5a2 2 0 0 1-2-2v-7.5a2 2 0 0 1 2-2z" fill="url(#bg21)" stroke="#8e8e8e" stroke-width="1"/><path d="M1.5 14.3H15" stroke="rgba(0,0,0,0.13)" stroke-width="0.8"/><g fill="#b0b0b0"><rect x="2.2" y="3" width="1.2" height="1"/><rect x="4.2" y="3" width="8.6" height="1"/><rect x="2.2" y="6" width="1.2" height="1"/><rect x="4.2" y="6" width="8.6" height="1"/><rect x="2.2" y="8.3" width="1.2" height="1"/><rect x="4.2" y="8.3" width="8.6" height="1"/></g></svg></span><span class="nm" style="letter-spacing:0.13px">de.comm.software.mozilla.misc</span></div>
<div class="row" style="top:399px"><span class="cnt">26.950</span><span class="ico"><svg width="16" height="16" viewBox="0 0 16 16"><defs><linearGradient id="bg22" x1="0" y1="0" x2="0" y2="1"><stop offset="0" stop-color="#fdfdfd"/><stop offset="1" stop-color="#e2e2e2"/></linearGradient></defs><path d="M2.5 0.5h10a2 2 0 0 1 2 2v7.5a2 2 0 0 1-2 2h-8l-1.5 2v-2h-0.5a2 2 0 0 1-2-2v-7.5a2 2 0 0 1 2-2z" fill="url(#bg22)" stroke="#8e8e8e" stroke-width="1"/><path d="M1.5 14.3H15" stroke="rgba(0,0,0,0.13)" stroke-width="0.8"/><g fill="#b0b0b0"><rect x="2.2" y="3" width="1.2" height="1"/><rect x="4.2" y="3" width="8.6" height="1"/><rect x="2.2" y="6" width="1.2" height="1"/><rect x="4.2" y="6" width="8.6" height="1"/><rect x="2.2" y="8.3" width="1.2" height="1"/><rect x="4.2" y="8.3" width="8.6" height="1"/></g></svg></span><span class="nm" style="letter-spacing:0.22px">de.comm.software.mozilla.nightly-builds</span></div>
<div class="row odd" style="top:417px"><span class="cnt">121.241</span><span class="ico"><svg width="16" height="16" viewBox="0 0 16 16"><defs><linearGradient id="bg23" x1="0" y1="0" x2="0" y2="1"><stop offset="0" stop-color="#fdfdfd"/><stop offset="1" stop-color="#e2e2e2"/></linearGradient></defs><path d="M2.5 0.5h10a2 2 0 0 1 2 2v7.5a2 2 0 0 1-2 2h-8l-1.5 2v-2h-0.5a2 2 0 0 1-2-2v-7.5a2 2 0 0 1 2-2z" fill="url(#bg23)" stroke="#8e8e8e" stroke-width="1"/><path d="M1.5 14.3H15" stroke="rgba(0,0,0,0.13)" stroke-width="0.8"/><g fill="#b0b0b0"><rect x="2.2" y="3" width="1.2" height="1"/><rect x="4.2" y="3" width="8.6" height="1"/><rect x="2.2" y="6" width="1.2" height="1"/><rect x="4.2" y="6" width="8.6" height="1"/><rect x="2.2" y="8.3" width="1.2" height="1"/><rect x="4.2" y="8.3" width="8.6" height="1"/></g></svg></span><span class="nm" style="letter-spacing:0.0px">de.comm.software.newsreader</span></div>
<div class="row" style="top:435px"><span class="cnt">30.334</span><span class="ico"><svg width="16" height="16" viewBox="0 0 16 16"><defs><linearGradient id="bg24" x1="0" y1="0" x2="0" y2="1"><stop offset="0" stop-color="#fdfdfd"/><stop offset="1" stop-color="#e2e2e2"/></linearGradient></defs><path d="M2.5 0.5h10a2 2 0 0 1 2 2v7.5a2 2 0 0 1-2 2h-8l-1.5 2v-2h-0.5a2 2 0 0 1-2-2v-7.5a2 2 0 0 1 2-2z" fill="url(#bg24)" stroke="#8e8e8e" stroke-width="1"/><path d="M1.5 14.3H15" stroke="rgba(0,0,0,0.13)" stroke-width="0.8"/><g fill="#b0b0b0"><rect x="2.2" y="3" width="1.2" height="1"/><rect x="4.2" y="3" width="8.6" height="1"/><rect x="2.2" y="6" width="1.2" height="1"/><rect x="4.2" y="6" width="8.6" height="1"/><rect x="2.2" y="8.3" width="1.2" height="1"/><rect x="4.2" y="8.3" width="8.6" height="1"/></g></svg></span><span class="nm" style="letter-spacing:-0.02px">de.comm.software.newsserver</span></div>
<div class="row odd" style="top:453px"><span class="cnt">28.632</span><span class="ico"><svg width="16" height="16" viewBox="0 0 16 16"><defs><linearGradient id="bg25" x1="0" y1="0" x2="0" y2="1"><stop offset="0" stop-color="#fdfdfd"/><stop offset="1" stop-color="#e2e2e2"/></linearGradient></defs><path d="M2.5 0.5h10a2 2 0 0 1 2 2v7.5a2 2 0 0 1-2 2h-8l-1.5 2v-2h-0.5a2 2 0 0 1-2-2v-7.5a2 2 0 0 1 2-2z" fill="url(#bg25)" stroke="#8e8e8e" stroke-width="1"/><path d="M1.5 14.3H15" stroke="rgba(0,0,0,0.13)" stroke-width="0.8"/><g fill="#b0b0b0"><rect x="2.2" y="3" width="1.2" height="1"/><rect x="4.2" y="3" width="8.6" height="1"/><rect x="2.2" y="6" width="1.2" height="1"/><rect x="4.2" y="6" width="8.6" height="1"/><rect x="2.2" y="8.3" width="1.2" height="1"/><rect x="4.2" y="8.3" width="8.6" height="1"/></g></svg></span><span class="nm" style="letter-spacing:0.15px">de.comm.software.outlook-express</span></div>
<div class="row" style="top:471px"><span class="cnt">5.573</span><span class="ico"><svg width="16" height="16" viewBox="0 0 16 16"><defs><linearGradient id="bg26" x1="0" y1="0" x2="0" y2="1"><stop offset="0" stop-color="#fdfdfd"/><stop offset="1" stop-color="#e2e2e2"/></linearGradient></defs><path d="M2.5 0.5h10a2 2 0 0 1 2 2v7.5a2 2 0 0 1-2 2h-8l-1.5 2v-2h-0.5a2 2 0 0 1-2-2v-7.5a2 2 0 0 1 2-2z" fill="url(#bg26)" stroke="#8e8e8e" stroke-width="1"/><path d="M1.5 14.3H15" stroke="rgba(0,0,0,0.13)" stroke-width="0.8"/><g fill="#b0b0b0"><rect x="2.2" y="3" width="1.2" height="1"/><rect x="4.2" y="3" width="8.6" height="1"/><rect x="2.2" y="6" width="1.2" height="1"/><rect x="4.2" y="6" width="8.6" height="1"/><rect x="2.2" y="8.3" width="1.2" height="1"/><rect x="4.2" y="8.3" width="8.6" height="1"/></g></svg></span><span class="nm" style="letter-spacing:-0.0px">de.comm.software.webserver</span></div>
<div class="row odd" style="top:489px"><span class="cnt">151.423</span><span class="ico"><svg width="16" height="16" viewBox="0 0 16 16"><defs><linearGradient id="bg27" x1="0" y1="0" x2="0" y2="1"><stop offset="0" stop-color="#fdfdfd"/><stop offset="1" stop-color="#e2e2e2"/></linearGradient></defs><path d="M2.5 0.5h10a2 2 0 0 1 2 2v7.5a2 2 0 0 1-2 2h-8l-1.5 2v-2h-0.5a2 2 0 0 1-2-2v-7.5a2 2 0 0 1 2-2z" fill="url(#bg27)" stroke="#8e8e8e" stroke-width="1"/><path d="M1.5 14.3H15" stroke="rgba(0,0,0,0.13)" stroke-width="0.8"/><g fill="#b0b0b0"><rect x="2.2" y="3" width="1.2" height="1"/><rect x="4.2" y="3" width="8.6" height="1"/><rect x="2.2" y="6" width="1.2" height="1"/><rect x="4.2" y="6" width="8.6" height="1"/><rect x="2.2" y="8.3" width="1.2" height="1"/><rect x="4.2" y="8.3" width="8.6" height="1"/></g></svg></span><span class="nm" style="letter-spacing:0.13px">de.comm.technik.dsl</span></div>
<div class="row" style="top:507px"><span class="cnt">24.697</span><span class="ico"><svg width="16" height="16" viewBox="0 0 16 16"><defs><linearGradient id="bg28" x1="0" y1="0" x2="0" y2="1"><stop offset="0" stop-color="#fdfdfd"/><stop offset="1" stop-color="#e2e2e2"/></linearGradient></defs><path d="M2.5 0.5h10a2 2 0 0 1 2 2v7.5a2 2 0 0 1-2 2h-8l-1.5 2v-2h-0.5a2 2 0 0 1-2-2v-7.5a2 2 0 0 1 2-2z" fill="url(#bg28)" stroke="#8e8e8e" stroke-width="1"/><path d="M1.5 14.3H15" stroke="rgba(0,0,0,0.13)" stroke-width="0.8"/><g fill="#b0b0b0"><rect x="2.2" y="3" width="1.2" height="1"/><rect x="4.2" y="3" width="8.6" height="1"/><rect x="2.2" y="6" width="1.2" height="1"/><rect x="4.2" y="6" width="8.6" height="1"/><rect x="2.2" y="8.3" width="1.2" height="1"/><rect x="4.2" y="8.3" width="8.6" height="1"/></g></svg></span><span class="nm" style="letter-spacing:0.11px">de.comm.technik.isdn</span></div>
<div class="row odd" style="top:525px"><span class="cnt">3.294</span><span class="ico"><svg width="16" height="16" viewBox="0 0 16 16"><defs><linearGradient id="bg29" x1="0" y1="0" x2="0" y2="1"><stop offset="0" stop-color="#fdfdfd"/><stop offset="1" stop-color="#e2e2e2"/></linearGradient></defs><path d="M2.5 0.5h10a2 2 0 0 1 2 2v7.5a2 2 0 0 1-2 2h-8l-1.5 2v-2h-0.5a2 2 0 0 1-2-2v-7.5a2 2 0 0 1 2-2z" fill="url(#bg29)" stroke="#8e8e8e" stroke-width="1"/><path d="M1.5 14.3H15" stroke="rgba(0,0,0,0.13)" stroke-width="0.8"/><g fill="#b0b0b0"><rect x="2.2" y="3" width="1.2" height="1"/><rect x="4.2" y="3" width="8.6" height="1"/><rect x="2.2" y="6" width="1.2" height="1"/><rect x="4.2" y="6" width="8.6" height="1"/><rect x="2.2" y="8.3" width="1.2" height="1"/><rect x="4.2" y="8.3" width="8.6" height="1"/></g></svg></span><span class="nm" style="letter-spacing:0.12px">de.comm.technik.misc</span></div>
<div class="row" style="top:543px"><span class="cnt">18.033</span><span class="ico"><svg width="16" height="16" viewBox="0 0 16 16"><defs><linearGradient id="bg30" x1="0" y1="0" x2="0" y2="1"><stop offset="0" stop-color="#fdfdfd"/><stop offset="1" stop-color="#e2e2e2"/></linearGradient></defs><path d="M2.5 0.5h10a2 2 0 0 1 2 2v7.5a2 2 0 0 1-2 2h-8l-1.5 2v-2h-0.5a2 2 0 0 1-2-2v-7.5a2 2 0 0 1 2-2z" fill="url(#bg30)" stroke="#8e8e8e" stroke-width="1"/><path d="M1.5 14.3H15" stroke="rgba(0,0,0,0.13)" stroke-width="0.8"/><g fill="#b0b0b0"><rect x="2.2" y="3" width="1.2" height="1"/><rect x="4.2" y="3" width="8.6" height="1"/><rect x="2.2" y="6" width="1.2" height="1"/><rect x="4.2" y="6" width="8.6" height="1"/><rect x="2.2" y="8.3" width="1.2" height="1"/><rect x="4.2" y="8.3" width="8.6" height="1"/></g></svg></span><span class="nm" style="letter-spacing:0.21px">de.comm.technik.mobil</span></div>
<div class="row odd" style="top:561px"><span class="cnt">9.855</span><span class="ico"><svg width="16" height="16" viewBox="0 0 16 16"><defs><linearGradient id="bg31" x1="0" y1="0" x2="0" y2="1"><stop offset="0" stop-color="#fdfdfd"/><stop offset="1" stop-color="#e2e2e2"/></linearGradient></defs><path d="M2.5 0.5h10a2 2 0 0 1 2 2v7.5a2 2 0 0 1-2 2h-8l-1.5 2v-2h-0.5a2 2 0 0 1-2-2v-7.5a2 2 0 0 1 2-2z" fill="url(#bg31)" stroke="#8e8e8e" stroke-width="1"/><path d="M1.5 14.3H15" stroke="rgba(0,0,0,0.13)" stroke-width="0.8"/><g fill="#b0b0b0"><rect x="2.2" y="3" width="1.2" height="1"/><rect x="4.2" y="3" width="8.6" height="1"/><rect x="2.2" y="6" width="1.2" height="1"/><rect x="4.2" y="6" width="8.6" height="1"/><rect x="2.2" y="8.3" width="1.2" height="1"/><rect x="4.2" y="8.3" width="8.6" height="1"/></g></svg></span><span class="nm" style="letter-spacing:0.08px">de.comm.uucp</span></div>
</div>

<div id="scroll">
  <div id="track"></div>
  <div class="abs" style="left:1px;top:260px;width:13px;height:287px;border-radius:6.5px;background:linear-gradient(90deg,#0a2cb8 0%,#2a6ee0 10%,#a8d4f8 22%,#62b4f4 36%,#3ca6f0 60%,#88dcfe 86%,#2a6ad8 100%);box-shadow:inset 0 0 0 1px rgba(10,40,180,.6)"></div>
  <div class="abs" style="left:4px;top:552px;width:0;height:0;border-left:3.5px solid transparent;border-right:3.5px solid transparent;border-bottom:5px solid #555"></div>
  <div class="abs" style="left:0;top:562px;width:15px;height:1px;background:#bdbdbd"></div>
  <div class="abs" style="left:4px;top:568px;width:0;height:0;border-left:3.5px solid transparent;border-right:3.5px solid transparent;border-top:5px solid #555"></div>
</div>

<div id="bottom">
  <div class="abs" style="left:9px;top:4px;width:47px;height:22px;border-radius:4px;border:1px solid #535353;background:linear-gradient(#fdfdfd,#d9d9d9)"></div>
  <div class="abs" style="left:32px;top:5px;width:1px;height:20px;background:#555"></div>
  <div class="abs" style="left:16px;top:13px;width:11px;height:3px;background:#262626"></div>
  <div class="abs" style="left:20px;top:9px;width:3px;height:11px;background:#262626"></div>
  <div class="abs" style="left:39px;top:13px;width:11px;height:3px;background:#9a9a9a"></div>
  <div class="abs" style="left:64px;top:4px;width:42px;height:22px;border-radius:4px;border:1px solid #535353;background:linear-gradient(#fdfdfd,#d9d9d9)"></div>
  <svg class="abs" style="left:70px;top:7px" width="17" height="17" viewBox="0 0 17 17">
    <g fill="#222"><circle cx="8.5" cy="8.5" r="5.3"/>
    <rect x="7" y="0.8" width="3" height="15.4"/><rect x="0.8" y="7" width="15.4" height="3"/>
    <rect x="7" y="0.8" width="3" height="15.4" transform="rotate(45 8.5 8.5)"/><rect x="7" y="0.8" width="3" height="15.4" transform="rotate(-45 8.5 8.5)"/></g>
    <circle cx="8.5" cy="8.5" r="2.2" fill="#e6e6e6"/>
  </svg>
  <div class="abs" style="left:92.5px;top:13px;width:0;height:0;border-left:3.7px solid transparent;border-right:3.7px solid transparent;border-top:4.5px solid #222"></div>
  <div class="abs" style="left:501px;top:8px;font-size:12px;letter-spacing:0.1px;color:#1c1c1c">60 newsgroups</div>
  <svg class="abs" style="left:883px;top:16px" width="13" height="12" viewBox="0 0 13 12">
    <g stroke="#6a6a6a" stroke-width="1"><path d="M2 11L12 1"/><path d="M6 11L12 5"/><path d="M10 11L12 9"/></g>
    <g stroke="#eee" stroke-width="1"><path d="M3 11L12 2"/><path d="M7 11L12 6"/></g>
  </svg>
</div>

</body></html>
